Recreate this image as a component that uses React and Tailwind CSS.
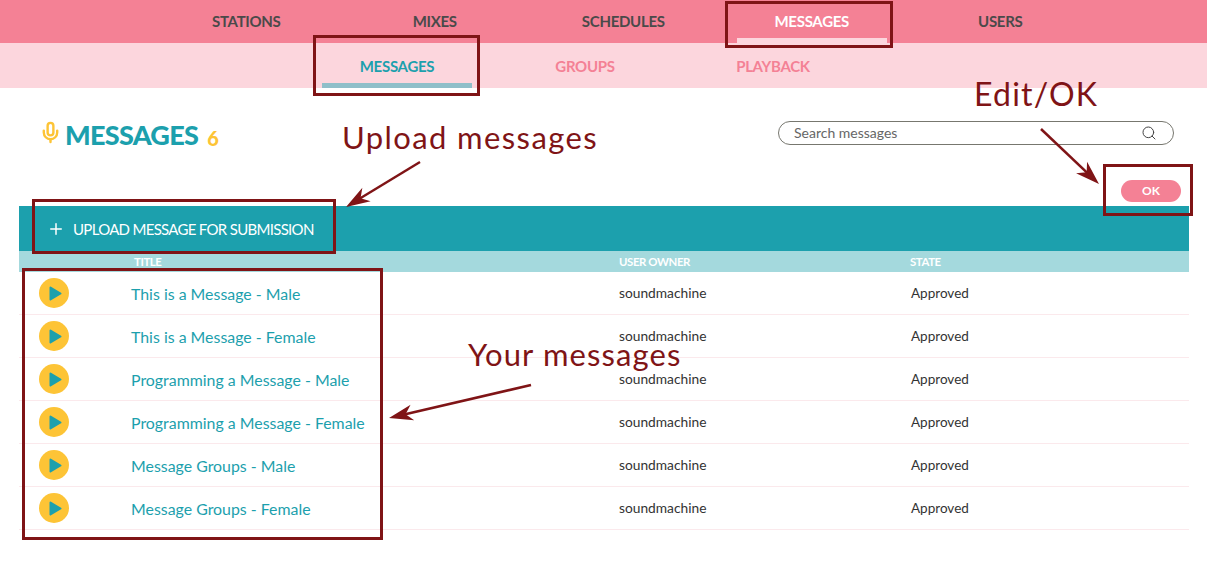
import React from "react";
import { Mic, Search, Plus } from "lucide-react";

const mainNav = [
  { label: "STATIONS" },
  { label: "MIXES" },
  { label: "SCHEDULES" },
  { label: "MESSAGES", active: true },
  { label: "USERS" },
];

const subNav = [
  { label: "MESSAGES", active: true },
  { label: "GROUPS" },
  { label: "PLAYBACK" },
];

const rows = [
  "This is a Message - Male",
  "This is a Message - Female",
  "Programming a Message - Male",
  "Programming a Message - Female",
  "Message Groups - Male",
  "Message Groups - Female",
];

const RED = "#7f1416";

function Arrow({ x1, y1, x2, y2 }) {
  // line with a swept-back head, drawn pointing from (x1,y1) to (x2,y2)
  const a = Math.atan2(y2 - y1, x2 - x1);
  const pt = (back, side) => {
    const bx = x2 - back * Math.cos(a) - side * Math.sin(a);
    const by = y2 - back * Math.sin(a) + side * Math.cos(a);
    return `${bx},${by}`;
  };
  return (
    <>
      <line x1={x1} y1={y1} x2={x2 - 10 * Math.cos(a)} y2={y2 - 10 * Math.sin(a)} stroke={RED} strokeWidth="2.5" />
      <polygon points={`${x2},${y2} ${pt(24, 8)} ${pt(17, 0)} ${pt(24, -8)}`} fill={RED} />
    </>
  );
}

function Box({ className }) {
  return <div className={`absolute border-[3px] border-[#7f1416] ${className}`} />;
}

function Note({ className, children }) {
  return <div className={`absolute whitespace-nowrap text-[#7f1416] font-['Lato',sans-serif] ${className}`}>{children}</div>;
}

export default function App() {
  return (
    <div className="relative w-[1207px] h-[569px] overflow-hidden bg-white font-['Lato',sans-serif]">
      {/* main nav */}
      <nav className="flex h-[43px] bg-[#f48195] pl-[152px]">
        {mainNav.map((item) => (
          <div key={item.label} className="flex w-[188.5px] flex-col items-center">
            <span className={`mt-[12px] text-[15px] leading-[18px] font-bold tracking-[-0.3px] ${item.active ? "text-white" : "text-[#4a4a4a]"}`}>
              {item.label}
            </span>
            {item.active && <span className="mt-[8px] h-[5px] w-[150px] bg-[#fcd6dd]" />}
          </div>
        ))}
      </nav>

      {/* sub nav */}
      <nav className="flex h-[45px] bg-[#fcd6dd] pl-[303px]">
        {subNav.map((item) => (
          <div key={item.label} className="flex w-[188px] flex-col items-center">
            <span className={`mt-[14px] text-[15px] leading-[18px] font-bold tracking-[-0.3px] ${item.active ? "text-[#1ca0ad]" : "text-[#f48195]"}`}>
              {item.label}
            </span>
            {item.active && <span className="mt-[8px] h-[5px] w-[150px] bg-[#8fbfc9]" />}
          </div>
        ))}
      </nav>

      {/* page header */}
      <div className="flex h-[118px] items-start pl-[39px] pr-[33px]">
        <div className="mt-[31px] flex items-center">
          <Mic size={23} strokeWidth={2.5} className="-mt-[6px] text-[#fdc436]" />
          <h1 className="ml-[3px] text-[27px] leading-[32px] font-black tracking-[-0.7px] text-[#1ca0ad]">MESSAGES</h1>
          <span className="ml-[9px] mt-[5px] text-[20px] leading-[22px] font-black text-[#fdc436]">6</span>
        </div>
        <div className="ml-auto flex flex-col items-end">
          <div className="mt-[33px] flex h-[24px] w-[396px] items-center justify-between rounded-full border border-[#77776f] pl-[15px] pr-[16px]">
            <span className="-mt-[2px] text-[14px] text-[#666]">Search messages</span>
            <Search size={16} strokeWidth={1.5} className="text-[#444]" />
          </div>
          <button className="mt-[35px] mr-[-7px] flex h-[22px] w-[60px] items-center justify-center rounded-full bg-[#f48195] text-[12px] font-bold text-white">
            OK
          </button>
        </div>
      </div>

      {/* table */}
      <div className="ml-[19px] w-[1170px]">
        <div className="flex h-[45px] items-center bg-[#1ca0ad] pl-[28px] text-white">
          <Plus size={18} strokeWidth={2} />
          <span className="ml-[8px] mt-[1px] text-[15px] tracking-[-0.7px]">UPLOAD MESSAGE FOR SUBMISSION</span>
        </div>
        <div className="flex h-[21px] items-center bg-[#a4d9dd] pt-[1px] text-[11.4px] font-bold tracking-[-0.4px] text-white">
          <span className="ml-[115px] w-[485px]">TITLE</span>
          <span className="w-[291px]">USER OWNER</span>
          <span>STATE</span>
        </div>
        {rows.map((title) => (
          <div key={title} className="flex h-[43px] items-center border-b border-[#fbe9ec]">
            <span className="ml-[20px] flex h-[30px] w-[30px] items-center justify-center rounded-full bg-[#fdc436]">
              <svg className="ml-[1px]" width="14" height="15" viewBox="0 0 14 15">
                <path d="M2.5 1.5 L12.5 7.5 L2.5 13.5 Z" fill="#1ca0ad" stroke="#1ca0ad" strokeWidth="2" strokeLinejoin="round" />
              </svg>
            </span>
            <span className="ml-[62px] mt-[2px] w-[488px] text-[15.9px] text-[#1ca0ad]">{title}</span>
            <span className="w-[292px] text-[13.75px] text-[#333]">soundmachine</span>
            <span className="text-[13.5px] text-[#333]">Approved</span>
          </div>
        ))}
      </div>

      {/* annotations */}
      <Box className="left-[313px] top-[35px] h-[61px] w-[167px]" />
      <Box className="left-[725px] top-[1px] h-[47px] w-[168px]" />
      <Box className="left-[1103px] top-[164px] h-[52px] w-[90px]" />
      <Box className="left-[32px] top-[199px] h-[55px] w-[304px]" />
      <Box className="left-[22px] top-[268px] h-[272px] w-[361px]" />
      <Note className="left-[342px] top-[117px] text-[31px] leading-[40px] tracking-[1.4px]">Upload messages</Note>
      <Note className="left-[974px] top-[74px] text-[32px] leading-[40px] tracking-[1.2px]">Edit/OK</Note>
      <Note className="left-[468px] top-[334px] text-[31px] leading-[40px] tracking-[1.1px]">Your messages</Note>
      <svg className="absolute left-0 top-0 pointer-events-none" width="1207" height="569">
        <Arrow x1={420} y1={162} x2={346} y2={207} />
        <Arrow x1={1041} y1={129} x2={1099} y2={184} />
        <Arrow x1={531} y1={385} x2={389} y2={418} />
      </svg>
    </div>
  );
}
